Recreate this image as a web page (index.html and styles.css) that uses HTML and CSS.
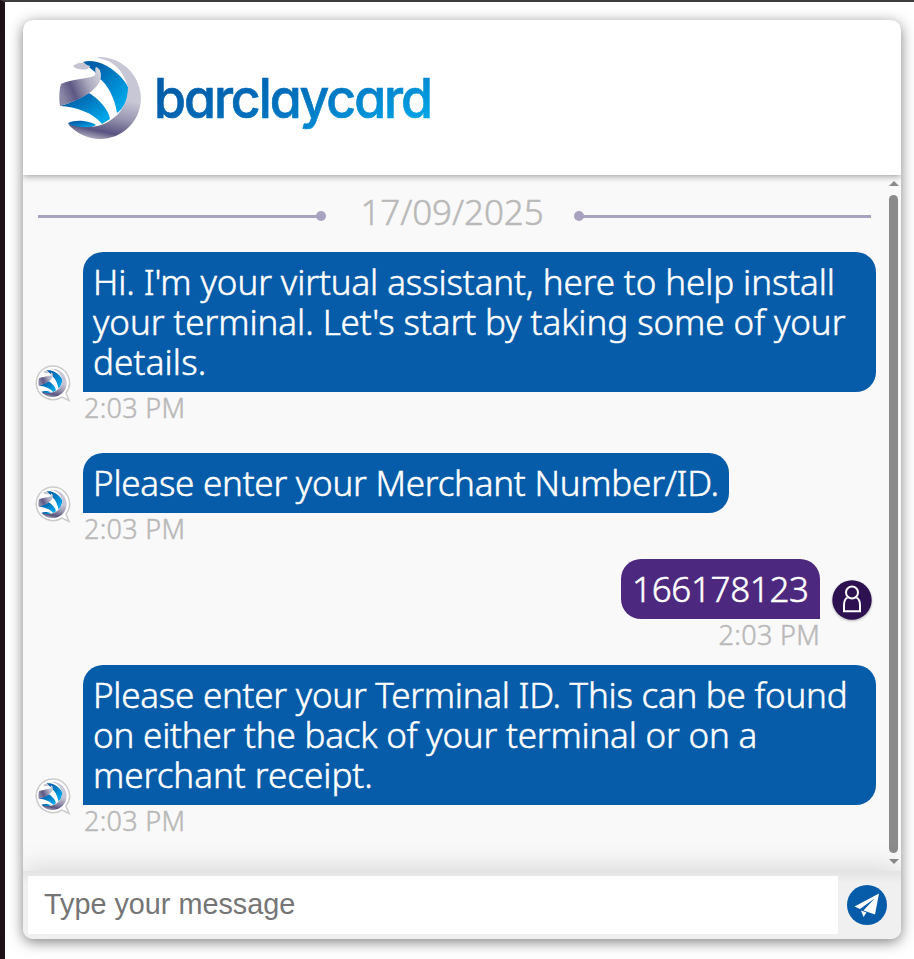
FILE: index.html
```html
<!DOCTYPE html>
<html lang="en">
<head>
<meta charset="utf-8">
<title>Virtual assistant</title>
<link rel="stylesheet" href="styles.css">
</head>
<body>
<svg class="defs" width="0" height="0" aria-hidden="true">
  <defs>
    <linearGradient id="blue" x1="0" y1="0" x2="1" y2="1"><stop offset=".2" stop-color="#0060aa"/><stop offset=".85" stop-color="#00a6ea"/></linearGradient>
    <linearGradient id="ring" gradientUnits="userSpaceOnUse" x1="60" y1="0" x2="42" y2="84"><stop offset=".48" stop-color="#c8c7d6"/><stop offset=".7" stop-color="#9a98b2"/><stop offset=".9" stop-color="#58537f"/><stop offset="1" stop-color="#aaa8bd"/></linearGradient>
    <linearGradient id="wing" x1="0" y1=".6" x2="1" y2=".2"><stop offset="0" stop-color="#8b88a6"/><stop offset=".28" stop-color="#5d5884"/><stop offset=".65" stop-color="#aaa8bd"/><stop offset="1" stop-color="#d5d4df"/></linearGradient>
    <symbol id="eagle" viewBox="0 0 84 84">
      <path fill="url(#blue)" d="M25 6C31 4 40 5 49 10C59 16 66 23 70 31C71 42 66 52 59 57C57 42 49 28 42 23L37 16L32 12Z"/>
      <path fill="url(#blue)" d="M2 50C13 47 23 42 31 37C41 43 51 54 52 63L44 68C34 56 18 51 2 50Z"/>
      <path fill="url(#blue)" d="M10 67C18 63 32 65 38 69C29 74 15 73 10 67Z"/>
      <path fill="url(#ring)" d="M40 1C64 0 83 20 83 43C82 67 63 83 42 83C28 83 17 76 10 68C23 73 39 72 50 66C63 58 70 47 70 31C65 15 57 5 40 2Z"/>
      <path fill="#c5c4d3" d="M15 10C18 7 23 6 26 7C27 9 31 9 32 10C32 12 29 12 30 13C26 14 18 14 15 10Z"/>
      <path fill="url(#wing)" d="M3 28C14 23 29 23 36 20C39 18 36 13 38 11C43 12 44 20 42 25C37 36 20 45 2 50C1 43 1 34 3 28Z"/>
    </symbol>
    <symbol id="bot" viewBox="0 0 38 40">
      <path class="bot-bubble" d="M18.5 2A16.8 16.8 0 1 0 28 33L35 36.5L32 29A16.8 16.8 0 0 0 18.5 2Z"/>
      <use href="#eagle" x="4" y="4.5" width="29" height="29"/>
    </symbol>
  </defs>
</svg>
<main class="chat">
  <header class="head">
    <svg class="mark"><use href="#eagle"/></svg>
    <svg class="word" viewBox="0 0 280 70">
      <defs><linearGradient id="wg" gradientUnits="userSpaceOnUse" x1="90" y1="-10" x2="150" y2="120"><stop offset="0" stop-color="#005eaa"/><stop offset=".4" stop-color="#0071bd"/><stop offset="1" stop-color="#00aff0"/></linearGradient></defs>
      <text x="-1" y="49" textLength="277" lengthAdjust="spacingAndGlyphs" fill="url(#wg)" stroke="url(#wg)">barclaycard</text>
    </svg>
  </header>
  <section class="log">
    <div class="msgs">
      <div class="date"><i class="rule left"></i><span>17/09/2025</span><i class="rule right"></i></div>
      <div class="row tall">
        <svg class="bot"><use href="#bot"/></svg>
        <div class="col"><p class="bubble full"><span class="l1">Hi. I'm your virtual assistant, here to help install</span><span class="l2">your terminal. Let's start by taking some of your</span><span class="l3">details.</span></p><time>2:03 PM</time></div>
      </div>
      <div class="row second">
        <svg class="bot"><use href="#bot"/></svg>
        <div class="col"><p class="bubble ask"><span class="l4">Please enter your Merchant Number/ID.</span></p><time>2:03 PM</time></div>
      </div>
      <div class="row me">
        <div class="col"><p class="bubble mine"><span class="l5">166178123</span></p><time>2:03 PM</time></div>
        <svg class="user" viewBox="0 0 40 40"><circle cx="20" cy="20" r="19.7" fill="#2e1150"/><g fill="none" stroke="#fff" stroke-width="2"><circle cx="20" cy="12.5" r="6"/><path d="M15.5 17.5C12.8 19 12 22 12 25V31.3H28V25C28 22 27 19 24.5 17.5"/></g></svg>
      </div>
      <div class="row">
        <svg class="bot"><use href="#bot"/></svg>
        <div class="col"><p class="bubble full"><span class="l6">Please enter your Terminal ID. This can be found</span><span class="l7">on either the back of your terminal or on a</span><span class="l8">merchant receipt.</span></p><time>2:03 PM</time></div>
      </div>
    </div>
    <div class="bar"><i class="up"></i><i class="thumb"></i><i class="down"></i></div>
  </section>
  <footer class="foot">
    <input type="text" placeholder="Type your message" aria-label="Message">
    <button aria-label="Send"><svg viewBox="0 0 40 40"><circle cx="20" cy="20" r="20" fill="#075ca9"/><path fill="#fff" d="M32 8.5L7.5 21.5L13 24L27.5 13.5L16.5 25.5L28 29.5ZM14 25.5L16.5 32L19.5 27.5Z"/></svg></button>
  </footer>
</main>
</body>
</html>
```
FILE: styles.css
```css
* { box-sizing: border-box; }
html { background: #fff; }
body {
  margin: 0;
  height: 959px;
  overflow: hidden;
  border-left: 5px solid #1d1017;
  border-top: 2px solid #3f3c3f;
  padding: 18px 13px 20px 18px;
  font-family: "Noto Sans", "Open Sans", sans-serif;
  font-weight: 300;
}
.defs { position: absolute; }
.chat {
  display: flex;
  flex-direction: column;
  height: 919px;
  border-radius: 10px;
  overflow: hidden;
  background: #f9f9f9;
  box-shadow: 0 3px 14px rgba(0, 0, 0, .5);
}
.head {
  display: flex;
  flex: 0 0 155px;
  padding: 36px 0 0 35px;
  background: #fff;
  box-shadow: 0 1px 7px rgba(0, 0, 0, .4);
  z-index: 1;
}
.mark { width: 84px; height: 84px; }
.word { width: 280px; height: 70px; margin: 13px 0 0 13px; overflow: visible; }
.word text {
  font-family: Inter, sans-serif;
  font-size: 55px;
  font-weight: 500;
  letter-spacing: -2.2px;
  stroke-width: .7px;
  font-feature-settings: "cv11";
}
.log { display: flex; flex: 0 0 696px; -webkit-text-stroke: .5px; }
.msgs { width: 864px; padding: 17px 11px 0; }
.date {
  display: flex;
  align-items: center;
  height: 48px;
  margin: 0 5px 12px 4px;
  color: #b9b9b9;
  font-size: 35px;
}
.date span { flex: 0 0 248px; padding: 0 0 9px 4px; text-align: center; letter-spacing: -.1px; }
.rule { display: flex; align-items: center; flex: 1; }
.rule.left { flex: 0 0 288px; }
.rule::before { content: ""; flex: 1; height: 3px; background: #a8a1bf; }
.rule::after { content: ""; width: 10px; height: 10px; border-radius: 50%; background: #a8a1bf; margin-left: -2px; }
.rule.right { flex-direction: row-reverse; }
.rule.right::after { margin: 0 -2px 0 0; }
.row { display: flex; align-items: flex-end; height: 172px; }
.row.tall { margin-bottom: 29px; }
.row.second { height: 92px; margin-bottom: 14px; }
.row.me { height: 92px; margin-bottom: 14px; justify-content: flex-end; padding-right: 3px; }
.bot { width: 38px; height: 40px; margin-bottom: 20px; }
.bot-bubble { fill: #fff; stroke: #ccc; stroke-width: 1.5; }
.col { display: flex; flex-direction: column; align-items: flex-start; align-self: flex-start; margin-left: 11px; }
.bubble {
  margin: 0;
  padding: 10px;
  border-radius: 20px 20px 20px 0;
  background: #075ca9;
  color: #fff;
  font-size: 35px;
  line-height: 40px;
}
.bubble span { display: block; white-space: nowrap; }
.l1 { letter-spacing: -.1px; }
.l2 { letter-spacing: -.07px; }
.l3 { letter-spacing: .15px; }
.l4 { letter-spacing: -.24px; }
.l5 { letter-spacing: -.35px; padding-left: 1px; }
.l6 { letter-spacing: -.25px; }
.l7 { letter-spacing: -.2px; }
.full { width: 793px; }
.ask { width: 646px; }
.mine { width: 199px; background: #4d287f; border-radius: 20px 20px 0 20px; }
time { margin-left: 1px; font-size: 27px; line-height: 32px; color: #b9b9b9; letter-spacing: .3px; }
.me .col { align-items: flex-end; }
.user { width: 40px; height: 40px; margin: 0 1px 31px 12px; align-self: flex-end; filter: drop-shadow(0 1px 1px rgba(0, 0, 0, .3)); }
.bar { display: flex; flex-direction: column; align-items: center; width: 13px; padding: 6px 0; }
.thumb { width: 9px; height: 658px; border-radius: 5px; background: #8b8b8b; margin: 9px 0 6px; }
.up, .down { border: 5px solid transparent; border-top: 0; border-bottom: 5px solid #8b8b8b; }
.down { border-bottom: 0; border-top: 5px solid #8b8b8b; }
.foot {
  display: flex;
  flex: 0 0 68px;
  padding: 5px;
  background: linear-gradient(#e3e3e3, #f0f0f0 12px);
  box-shadow: 0 -2px 28px rgba(0, 0, 0, .15);
  z-index: 1;
}
.foot input {
  width: 810px;
  height: 58px;
  border: 0;
  padding: 0 16px 2px;
  background: #fff;
  font: 28.8px "Liberation Sans", Arial, sans-serif;
}
.foot input::placeholder { color: #757575; }
.foot button { border: 0; padding: 0; width: 40px; height: 40px; margin: 9px 0 0 9px; background: none; }
.foot svg { display: block; width: 40px; height: 40px; }
```
